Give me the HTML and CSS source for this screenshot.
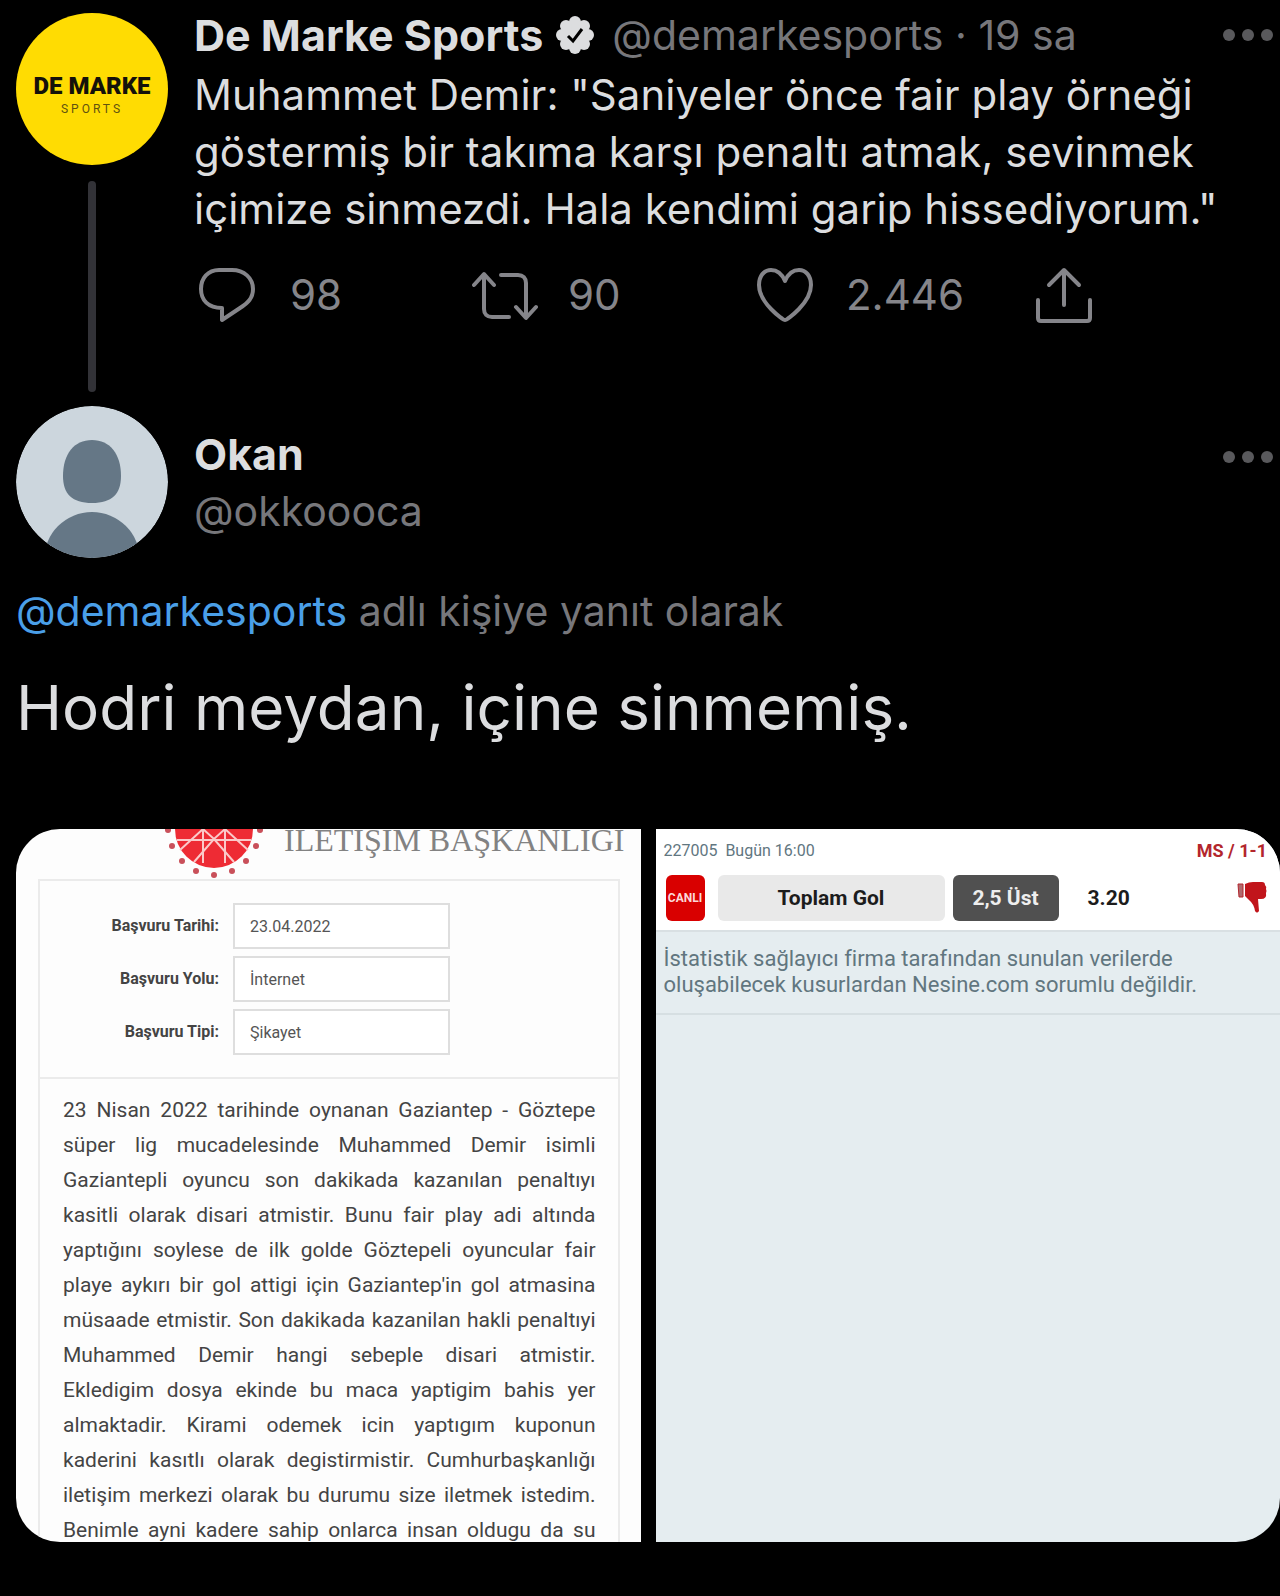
FILE: index.html
```html
<!DOCTYPE html>
<html lang="tr">

<head>
    <meta charset="UTF-8">
    <meta name="viewport" content="width=device-width, initial-scale=1.0">
    <title>Tweet</title>
    <link rel="stylesheet" href="styles.css">
</head>

<body>
    <main class="thread">
        <!-- Üst tweet -->
        <article class="tweet">
            <div class="side">
                <div class="avatar avatar-brand">
                    <span class="brand-name">DE MARKE</span>
                    <span class="brand-sub">SPORTS</span>
                </div>
                <div class="thread-line"></div>
            </div>
            <div class="content">
                <header class="head">
                    <span class="name">De Marke Sports</span>
                    <svg class="verified" viewBox="0 0 38 38" aria-label="Onaylanmış hesap">
                        <g fill="#dcdddf">
                            <circle cx="19" cy="19" r="14" />
                            <circle cx="19" cy="6" r="6" />
                            <circle cx="28" cy="10" r="6" />
                            <circle cx="32" cy="19" r="6" />
                            <circle cx="28" cy="28" r="6" />
                            <circle cx="19" cy="32" r="6" />
                            <circle cx="10" cy="28" r="6" />
                            <circle cx="6" cy="19" r="6" />
                            <circle cx="10" cy="10" r="6" />
                        </g>
                        <path d="M12 20l5 5 9-12" fill="none" stroke="#000" stroke-width="3" />
                    </svg>
                    <span class="handle">@demarkesports · 19 sa</span>
                    <button class="more" aria-label="Daha fazla"><i></i><i></i><i></i></button>
                </header>
                <p class="text">Muhammet Demir: "Saniyeler önce fair play örneği<br>göstermiş bir takıma karşı penaltı atmak, sevinmek<br>içimize sinmezdi. Hala kendimi garip hissediyorum."</p>
                <div class="actions">
                    <button class="action" aria-label="Yanıtla">
                        <svg viewBox="0 0 66 56"><path d="M25 3h13C50 3 59 11 59 22c0 9-5 14-13 19L28 53V41C14 41 7 33 7 22 7 11 14 3 25 3z" /></svg>
                        <span>98</span>
                    </button>
                    <button class="action" aria-label="Retweetle">
                        <svg viewBox="0 0 66 56"><path d="M2 18L12 7l10 11M12 8v34c0 5 3 8 8 8h17M29 8h17c5 0 8 3 8 8v34M44 40l10 11 10-11" /></svg>
                        <span>90</span>
                    </button>
                    <button class="action" aria-label="Beğen">
                        <svg viewBox="0 0 66 56"><path d="M35 53c-2 0-26-17-26-35C9 9 14 3 21 3c6 0 11 4 14 11C38 7 43 3 49 3c7 0 12 6 12 15 0 18-24 35-26 35z" /></svg>
                        <span>2.446</span>
                    </button>
                    <button class="action" aria-label="Paylaş">
                        <svg viewBox="0 0 66 56"><path d="M36 38V4M21 18L36 3l15 15M10 33v18q0 3 3 3h46q3 0 3-3V33" /></svg>
                    </button>
                </div>
            </div>
        </article>

        <!-- Yanıt -->
        <article class="reply">
            <header class="reply-head">
                <svg class="avatar" viewBox="0 0 152 152">
                    <clipPath id="round"><circle cx="76" cy="76" r="76" /></clipPath>
                    <g clip-path="url(#round)">
                        <rect width="152" height="152" fill="#ccd6dd" />
                        <path d="M76 34c18 0 29 14 29 36 0 18-9 27-29 27s-29-9-29-27c0-22 11-36 29-36z" fill="#657786" />
                        <circle cx="76" cy="154" r="48" fill="#657786" />
                    </g>
                </svg>
                <div class="who">
                    <span class="name">Okan</span>
                    <span class="handle">@okkoooca</span>
                </div>
                <button class="more" aria-label="Daha fazla"><i></i><i></i><i></i></button>
            </header>
            <p class="replying"><a href="#">@demarkesports</a> adlı kişiye yanıt olarak</p>
            <p class="big">Hodri meydan, içine sinmemiş.</p>

            <div class="photos">
                <!-- Başvuru belgesi -->
                <section class="photo">
                    <div class="doc-head">
                        <svg class="emblem" viewBox="0 0 100 50">
                            <circle cx="50" cy="0" r="39" fill="#ee2b34" />
                            <path d="M13 11h74M30 33L50 10l20 23M39 0v34M61 0v34M39 0l11 10L61 0M39 0L16 21M61 0l23 21" fill="none" stroke="#fbc9c9" stroke-width="2" />
                            <g fill="#c9505a">
                                <circle cx="4" cy="1" r="3" /><circle cx="8" cy="17" r="3" />
                                <circle cx="18" cy="32" r="3" /><circle cx="32" cy="42" r="3" />
                                <circle cx="50" cy="46" r="3" /><circle cx="68" cy="42" r="3" />
                                <circle cx="82" cy="32" r="3" /><circle cx="92" cy="17" r="3" />
                                <circle cx="96" cy="1" r="3" />
                            </g>
                        </svg>
                        <span class="doc-title">İLETİŞİM BAŞKANLIĞI</span>
                    </div>
                    <div class="doc-box">
                        <form class="fields">
                            <label for="tarih">Başvuru Tarihi:</label>
                            <input type="text" id="tarih" value="23.04.2022">
                            <label for="yol">Başvuru Yolu:</label>
                            <input type="text" id="yol" value="İnternet">
                            <label for="tip">Başvuru Tipi:</label>
                            <input type="text" id="tip" value="Şikayet">
                        </form>
                        <p class="doc-text">
                            <span>23 Nisan 2022 tarihinde oynanan Gaziantep - Göztepe</span>
                            <span>süper lig mucadelesinde Muhammed Demir isimli</span>
                            <span>Gaziantepli oyuncu son dakikada kazanılan penaltıyı</span>
                            <span>kasitli olarak disari atmistir. Bunu fair play adi altında</span>
                            <span>yaptığını soylese de ilk golde Göztepeli oyuncular fair</span>
                            <span>playe aykırı bir gol attigi için Gaziantep'in gol atmasina</span>
                            <span>müsaade etmistir. Son dakikada kazanilan hakli penaltıyi</span>
                            <span>Muhammed Demir hangi sebeple disari atmistir.</span>
                            <span>Ekledigim dosya ekinde bu maca yaptigim bahis yer</span>
                            <span>almaktadir. Kirami odemek icin yaptıgım kuponun</span>
                            <span>kaderini kasıtlı olarak degistirmistir. Cumhurbaşkanlığı</span>
                            <span>iletişim merkezi olarak bu durumu size iletmek istedim.</span>
                            <span>Benimle ayni kadere sahip onlarca insan oldugu da su</span>
                        </p>
                    </div>
                </section>

                <!-- Kupon -->
                <section class="photo coupon">
                    <div class="match">
                        <div class="match-top">
                            <span>227005&nbsp; Bugün 16:00</span>
                            <b>MS / 1-1</b>
                        </div>
                        <div class="match-row">
                            <span class="live">CANLI</span>
                            <span class="market">Toplam Gol</span>
                            <span class="pick">2,5 Üst</span>
                            <span class="odd">3.20</span>
                            <svg class="thumb" viewBox="0 0 30 34">
                                <path d="M1 3h5v13H2z" fill="#b06a6e" stroke="#b3262d" />
                                <path d="M8 3q4-2 8-2h9q3 0 3 3 2 2 1 4 1 2 0 4 1 6-5 6h-3l1 12q-2 3-4 0-1-7-6-11l-4-4z" fill="#c1151b" />
                            </svg>
                        </div>
                    </div>
                    <p class="notice">İstatistik sağlayıcı firma tarafından sunulan verilerde<br>oluşabilecek kusurlardan Nesine.com sorumlu değildir.</p>
                </section>
            </div>
        </article>
    </main>
</body>

</html>
```

FILE: styles.css
```css
* {
    box-sizing: border-box;
}

body {
    margin: 0;
    background: #000;
    color: #dcdddf;
    font-family: Inter, "Noto Sans", sans-serif;
    font-size: 42px;
    line-height: 57px;
}

p {
    margin: 0;
}

button {
    background: none;
    border: none;
    padding: 0;
    font: inherit;
    color: inherit;
    cursor: pointer;
}

.thread {
    padding: 13px 0 54px 16px;
}

.tweet {
    display: flex;
    gap: 26px;
}

.side {
    display: flex;
    flex-direction: column;
    align-items: center;
    gap: 16px;
}

.avatar {
    width: 152px;
    height: 152px;
    border-radius: 50%;
    flex-shrink: 0;
}

.avatar-brand {
    background: #ffdc02;
    color: #14110a;
    display: flex;
    flex-direction: column;
    align-items: center;
    justify-content: center;
    padding-top: 8px;
}

.brand-name {
    font: 900 24px/32px Roboto, sans-serif;
    white-space: nowrap;
}

.brand-sub {
    color: #5f5210;
    font: 12px/14px Roboto, sans-serif;
    letter-spacing: 3px;
}

.thread-line {
    width: 8px;
    height: 211px;
    border-radius: 4px;
    background: #323237;
}

.content {
    flex: 1;
    min-width: 0;
}

.head {
    display: flex;
    align-items: center;
    height: 44px;
    white-space: nowrap;
}

.name {
    font-size: 43px;
    font-weight: bold;
}

.verified {
    width: 38px;
    height: 38px;
    margin: 0 18px 0 13px;
}

.handle {
    color: #77777b;
    font-size: 41px;
}

.more {
    display: flex;
    gap: 7px;
    margin: 0 7px 0 auto;
}

.more i {
    width: 12px;
    height: 12px;
    border-radius: 50%;
    background: #59595c;
}

.text {
    margin-top: 9px;
    white-space: nowrap;
}

.actions {
    display: flex;
    margin-top: 29px;
    color: #85858a;
}

.action {
    display: flex;
    align-items: center;
    flex-shrink: 0;
    gap: 30px;
    width: 278px;
}

.action:last-child {
    width: auto;
}

.action svg {
    width: 66px;
    height: 56px;
    fill: none;
    stroke: #85858a;
    stroke-width: 4;
    stroke-linecap: round;
    stroke-linejoin: round;
}

.reply {
    margin-top: 14px;
}

.reply-head {
    display: flex;
    gap: 26px;
}

.who {
    display: flex;
    flex-direction: column;
    padding-top: 20px;
}

.reply-head .more {
    margin-top: 45px;
}

.replying {
    margin-top: 25px;
    color: #77777b;
    font-size: 41px;
}

.replying a {
    color: #4a9fe8;
    text-decoration: none;
}

.big {
    margin-top: 28px;
    font-size: 62px;
    line-height: 80px;
}

.photos {
    display: grid;
    grid-template-columns: 1fr 1fr;
    gap: 15px;
    margin-top: 81px;
    height: 713px;
    border-radius: 44px;
    overflow: hidden;
}

.photo {
    background: #fdfdfd;
    overflow: hidden;
}

.doc-head {
    display: flex;
    align-items: flex-start;
    gap: 20px;
    height: 50px;
    padding-left: 148px;
}

.emblem {
    width: 100px;
    height: 50px;
}

.doc-title {
    color: #828282;
    font: 32px/36px "Liberation Serif", serif;
    white-space: nowrap;
    margin-top: -7px;
}

.doc-box {
    margin: 0 21px 0 22px;
    border: 2px solid #ebebeb;
    font-family: Roboto, sans-serif;
    color: #444;
}

.fields {
    display: grid;
    grid-template-columns: 179px 217px;
    gap: 7px 14px;
    align-items: center;
    padding: 22px 0;
    border-bottom: 2px solid #ebebeb;
}

.fields label {
    font-size: 16px;
    font-weight: bold;
    line-height: 46px;
    text-align: right;
}

.fields input {
    height: 46px;
    padding: 0 15px;
    border: 2px solid #dedede;
    background: #fff;
    color: #555;
    font: 16px Roboto, sans-serif;
}

.doc-text {
    padding: 14px 22px 14px 23px;
    font-size: 21px;
    line-height: 35px;
}

.doc-text span {
    display: block;
    text-align-last: justify;
    white-space: nowrap;
}

.coupon {
    background: #e5edf0;
    font-family: Roboto, sans-serif;
    color: #61767f;
}

.match {
    height: 103px;
    padding: 12px 13px 0 8px;
    background: #fff;
    border-bottom: 2px solid #d9e0e3;
}

.match-top {
    display: flex;
    justify-content: space-between;
    font-size: 16px;
    line-height: 20px;
}

.match-top b {
    color: #b3262d;
    font-size: 18px;
}

.match-row {
    display: flex;
    align-items: center;
    height: 46px;
    margin-top: 14px;
    color: #1c1c1c;
    font-size: 21px;
    line-height: 46px;
    font-weight: bold;
    text-align: center;
}

.live {
    width: 39px;
    margin-left: 2px;
    border-radius: 6px;
    background: #d90000;
    color: #fbd9d9;
    font-size: 12px;
}

.market {
    flex: 1;
    max-width: 227px;
    margin: 0 8px 0 13px;
    border-radius: 6px;
    background: #e9e9e9;
}

.pick {
    width: 106px;
    border-radius: 6px;
    background: #505050;
    color: #eee;
}

.odd {
    margin-left: 29px;
}

.thumb {
    width: 30px;
    height: 34px;
    margin-left: auto;
}

.notice {
    padding: 14px 8px 15px;
    border-bottom: 2px solid #d6dfe2;
    font-size: 22px;
    line-height: 26px;
    white-space: nowrap;
}
```
